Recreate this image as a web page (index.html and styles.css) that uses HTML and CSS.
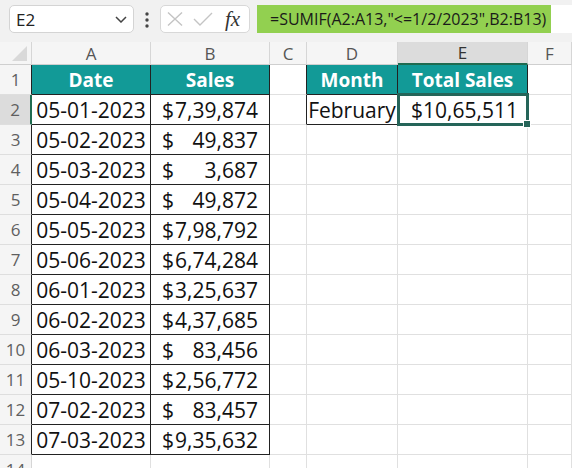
FILE: index.html
```html
<!DOCTYPE html>
<html lang="en">
<head>
  <meta charset="UTF-8" />
  <title>SUMIF by Date</title>
  <link rel="stylesheet" href="styles.css">
</head>
<body>
  <div class="toolbar">
    <div class="namebox">
      <span>E2</span>
      <svg class="chev" width="12" height="7" viewBox="0 0 12 7"><path d="M1 1 L6 6 L11 1" fill="none" stroke="#444" stroke-width="1.5"/></svg>
    </div>
    <svg class="dots" width="4" height="16" viewBox="0 0 4 16"><circle cx="2" cy="2" r="1.7" fill="#444"/><circle cx="2" cy="8" r="1.7" fill="#444"/><circle cx="2" cy="14" r="1.7" fill="#444"/></svg>
    <div class="fxbox">
      <svg width="16" height="14" viewBox="0 0 16 14"><path d="M1 0.5 L15 13.5 M15 0.5 L1 13.5" stroke="#c4c4c4" stroke-width="1.4" fill="none"/></svg>
      <svg width="20" height="14" viewBox="0 0 20 14"><path d="M1 7 L7 13 L19 1" stroke="#c4c4c4" stroke-width="1.4" fill="none"/></svg>
      <span class="fx">fx</span>
    </div>
    <div class="formula"><span>=SUMIF(A2:A13,"&lt;=1/2/2023",B2:B13)</span></div>
  </div>

  <div class="sheet">
    <div class="c ch corner"><svg width="15" height="15" viewBox="0 0 15 15"><path d="M15 0 L15 15 L0 15 Z" fill="#d9d9d9"/></svg></div>
    <div class="c ch">A</div>
    <div class="c ch">B</div>
    <div class="c ch">C</div>
    <div class="c ch">D</div>
    <div class="c ch sel">E</div>
    <div class="c ch">F</div>

    <div class="c rh edge">1</div>
    <div class="c th">Date</div>
    <div class="c th">Sales</div>
    <div class="c edge"></div>
    <div class="c th">Month</div>
    <div class="c th">Total Sales</div>
    <div class="c"></div>

    <div class="c rh sel">2</div>
    <div class="c td">05-01-2023</div>
    <div class="c td money"><span>$</span><span>7,39,874</span></div>
    <div class="c edge"></div>
    <div class="c td">February</div>
    <div class="c td money active"><span>$</span><span>10,65,511</span></div>
    <div class="c"></div>

    <div class="c rh edge">3</div>
    <div class="c td">05-02-2023</div>
    <div class="c td money"><span>$</span><span>49,837</span></div>
    <div class="c"></div><div class="c"></div><div class="c"></div><div class="c"></div>

    <div class="c rh edge">4</div>
    <div class="c td">05-03-2023</div>
    <div class="c td money"><span>$</span><span>3,687</span></div>
    <div class="c"></div><div class="c"></div><div class="c"></div><div class="c"></div>

    <div class="c rh edge">5</div>
    <div class="c td">05-04-2023</div>
    <div class="c td money"><span>$</span><span>49,872</span></div>
    <div class="c"></div><div class="c"></div><div class="c"></div><div class="c"></div>

    <div class="c rh edge">6</div>
    <div class="c td">05-05-2023</div>
    <div class="c td money"><span>$</span><span>7,98,792</span></div>
    <div class="c"></div><div class="c"></div><div class="c"></div><div class="c"></div>

    <div class="c rh edge">7</div>
    <div class="c td">05-06-2023</div>
    <div class="c td money"><span>$</span><span>6,74,284</span></div>
    <div class="c"></div><div class="c"></div><div class="c"></div><div class="c"></div>

    <div class="c rh edge">8</div>
    <div class="c td">06-01-2023</div>
    <div class="c td money"><span>$</span><span>3,25,637</span></div>
    <div class="c"></div><div class="c"></div><div class="c"></div><div class="c"></div>

    <div class="c rh edge">9</div>
    <div class="c td">06-02-2023</div>
    <div class="c td money"><span>$</span><span>4,37,685</span></div>
    <div class="c"></div><div class="c"></div><div class="c"></div><div class="c"></div>

    <div class="c rh edge">10</div>
    <div class="c td">06-03-2023</div>
    <div class="c td money"><span>$</span><span>83,456</span></div>
    <div class="c"></div><div class="c"></div><div class="c"></div><div class="c"></div>

    <div class="c rh edge">11</div>
    <div class="c td">05-10-2023</div>
    <div class="c td money"><span>$</span><span>2,56,772</span></div>
    <div class="c"></div><div class="c"></div><div class="c"></div><div class="c"></div>

    <div class="c rh edge">12</div>
    <div class="c td">07-02-2023</div>
    <div class="c td money"><span>$</span><span>83,457</span></div>
    <div class="c"></div><div class="c"></div><div class="c"></div><div class="c"></div>

    <div class="c rh edge">13</div>
    <div class="c td">07-03-2023</div>
    <div class="c td money"><span>$</span><span>9,35,632</span></div>
    <div class="c"></div><div class="c"></div><div class="c"></div><div class="c"></div>

    <div class="c rh">14</div>
    <div class="c"></div><div class="c"></div><div class="c"></div><div class="c"></div><div class="c"></div><div class="c"></div>
  </div>
</body>
</html>
```

FILE: styles.css
```css
body {
  margin: 0;
  padding: 0;
  width: 572px;
  height: 468px;
  overflow: hidden;
  background: #fff;
  font-family: 'Open Sans', 'Liberation Sans', sans-serif;
  color: #111;
}

/* formula bar */
.toolbar {
  height: 42px;
  background: #f1f1f1;
  display: flex;
  align-items: flex-start;
  padding-top: 5px;
  box-sizing: border-box;
}

.namebox {
  margin-left: 9px;
  width: 125px;
  height: 28px;
  box-sizing: border-box;
  background: #fff;
  border: 1px solid #d4d4d4;
  border-radius: 5px;
  display: flex;
  align-items: center;
  justify-content: space-between;
  padding: 0 6px 0 6px;
  font-size: 17px;
  color: #222;
}

.dots {
  margin: 7px 0 0 11px;
}

.fxbox {
  margin-left: 11px;
  width: 90px;
  height: 28px;
  box-sizing: border-box;
  background: #fff;
  border: 1px solid #d8d8d8;
  border-radius: 5px;
  display: flex;
  align-items: center;
  gap: 10px;
  padding-left: 6px;
}

.fx {
  font-family: 'Liberation Serif', serif;
  font-style: italic;
  font-size: 21px;
  color: #333;
  margin-left: 2px;
}

.formula {
  margin-left: 7px;
  flex: 1;
  height: 28px;
  background: #fff;
}

.formula span {
  display: block;
  width: 294px;
  height: 28px;
  box-sizing: border-box;
  background: #92d050;
  padding-left: 13px;
  font-size: 16px;
  line-height: 28px;
  color: #1a1a1a;
  white-space: nowrap;
}

/* grid */
.sheet {
  display: grid;
  grid-template-columns: 32px 119px 119px 37px 91px 130px 1fr;
  grid-template-rows: 23px;
  grid-auto-rows: 30px;
}

.c {
  box-sizing: border-box;
  border-right: 1px solid #e0e0e0;
  border-bottom: 1px solid #e0e0e0;
  display: flex;
  align-items: center;
  justify-content: center;
  font-size: 21px;
  white-space: nowrap;
}

.ch {
  background: #f5f5f5;
  color: #555;
  font-size: 17px;
  border-right-color: #d6d6d6;
  border-bottom-color: #cfcfcf;
}

.ch.sel {
  background: #dcdcdc;
  border-bottom: 2px solid #1f6b50;
  color: #333;
}

.corner {
  justify-content: flex-end;
  align-items: flex-end;
  padding: 0 4px 3px 0;
}

.rh {
  background: #f5f5f5;
  color: #5f5f5f;
  font-size: 17px;
  border-right-color: #d6d6d6;
  border-bottom-color: #dedede;
}

.rh.sel {
  background: #dcdcdc;
  border-right: 2px solid #1f6b50;
}

.edge {
  border-right-color: #222;
}

.th {
  background: #129a97;
  color: #fff;
  font-weight: bold;
  font-size: 19px;
  border-right-color: #222;
  border-bottom-color: #222;
}

.td {
  border-right-color: #222;
  border-bottom-color: #222;
}

.money {
  justify-content: space-between;
  padding: 0 11px;
}

.active {
  position: relative;
  padding: 0 9px 0 13px;
}

.active::after {
  content: "";
  position: absolute;
  left: -1px;
  top: -2px;
  right: -2px;
  bottom: -2px;
  border: 3px solid #256559;
}

.active::before {
  content: "";
  position: absolute;
  right: -4px;
  bottom: -4px;
  width: 6px;
  height: 6px;
  background: #256559;
  border: 1px solid #fff;
  z-index: 1;
}
```
